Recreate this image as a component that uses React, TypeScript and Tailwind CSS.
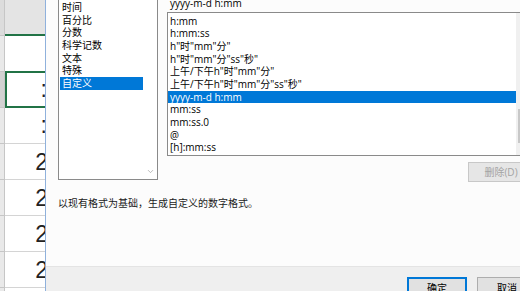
import { ChevronDown } from 'lucide-react';

const categories = ['日期', '时间', '百分比', '分数', '科学记数', '文本', '特殊', '自定义'];

const formats = [
  'h:mm',
  'h:mm:ss',
  'h"时"mm"分"',
  'h"时"mm"分"ss"秒"',
  '上午/下午h"时"mm"分"',
  '上午/下午h"时"mm"分"ss"秒"',
  'yyyy-m-d h:mm',
  'mm:ss',
  'mm:ss.0',
  '@',
  '[h]:mm:ss',
];

const rows = ['', ':', ':', '2', '2', '2', '2', ''];

function SheetStrip() {
  return (
    <div className="w-[45px] shrink-0 flex flex-col overflow-hidden bg-white">
      <div className="h-[36px] shrink-0 flex">
        <div className="w-[5px] bg-[#dcdcdc] border-r border-b border-[#c6c6c6]" />
        <div className="flex-1 bg-[#e4e4e4] border-b-2 border-[#217346]" />
      </div>
      {rows.map((r, i) => (
        <div key={i} className="h-[36px] shrink-0 flex">
          <div
            className={
              i === 1
                ? 'w-[5px] bg-[#d2d2d2] border-r border-b border-[#c6c6c6]'
                : 'w-[5px] bg-[#e9e9e9] border-r border-b border-[#c6c6c6]'
            }
          />
          <div
            className={
              i === 1
                ? 'flex-1 flex items-center justify-end border-2 border-r-0 border-[#217346] -mt-px overflow-hidden'
                : 'flex-1 flex items-center justify-end border-b border-[#d4d4d4] overflow-hidden'
            }
          >
            {r && (
              <span
                className={
                  r === ':'
                    ? "text-[23px] leading-none text-[#222] font-['Liberation_Sans',sans-serif] -mr-[2px]"
                    : "text-[23px] leading-none text-[#222] font-['Liberation_Sans',sans-serif] -mr-[3px] pt-[2px]"
                }
              >
                {r}
              </span>
            )}
          </div>
        </div>
      ))}
    </div>
  );
}

export default function App() {
  return (
    <div className="w-[520px] h-[291px] overflow-hidden flex bg-white font-['Open_Sans','Noto_Sans_CJK_SC',sans-serif] text-[10px] text-black">
      <SheetStrip />
      <div className="w-[500px] shrink-0 flex flex-col border-l border-[#8fb1dc] bg-[#fcfcfc]">
        <div className="h-[266px] shrink-0 flex flex-col pl-[12px] pr-[11px]">
          <div className="flex gap-[9px]">
            {/* category list */}
            <div className="w-[100px] h-[180px] shrink-0 flex border-x border-b border-[#8a8a8a] bg-white overflow-hidden">
              <div className="flex-1 pl-px -mt-[11.7px]">
                {categories.map((c) => (
                  <div
                    key={c}
                    className={
                      c === '自定义'
                        ? 'h-[12.7px] leading-[12.7px] pl-[2px] bg-[#0078d7] text-white'
                        : 'h-[12.7px] leading-[12.7px] pl-[2px]'
                    }
                  >
                    {c}
                  </div>
                ))}
              </div>
              <div className="w-[14px] flex flex-col justify-end items-center pb-[3px]">
                <ChevronDown className="w-[9px] h-[9px] text-[#a6a6a6]" strokeWidth={2} />
              </div>
            </div>

            {/* type + format list */}
            <div className="flex-1 flex flex-col">
              <div className="h-[12px] -mt-[3px] pl-[3px] leading-[12px] whitespace-nowrap">yyyy-m-d h:mm</div>
              <div className="h-[144px] mt-[3px] flex border border-[#8a8a8a] bg-white">
                <div className="flex-1 pt-[1.5px]">
                  {formats.map((f) => (
                    <div
                      key={f}
                      className={
                        f === 'yyyy-m-d h:mm'
                          ? 'h-[12.7px] leading-[12.7px] pl-[2px] whitespace-nowrap bg-[#0078d7] text-white'
                          : 'h-[12.7px] leading-[12.7px] pl-[2px] whitespace-nowrap'
                      }
                    >
                      {f}
                    </div>
                  ))}
                </div>
                <div className="w-[17px] bg-[#f0f0f0] pt-[96px]">
                  <div className="h-[34px] mx-[2px] bg-[#c8c8c8]" />
                </div>
              </div>
              <div className="self-end mt-[6px] w-[66px] h-[20px] flex items-center justify-center bg-[#e6e6e6] border border-[#c8c8c8] text-[#a3a3a3]">
                删除(D)
              </div>
            </div>
          </div>
          <div className="mt-[15px] leading-[12.7px] text-[#1a1a1a]">以现有格式为基础，生成自定义的数字格式。</div>
        </div>
        <div className="flex-1 flex justify-end gap-[10px] pr-[8px] pt-[10px] bg-[#efefef] border-t border-[#e4e4e4]">
          <div className="w-[60px] h-[22px] flex items-center justify-center bg-[#e1e1e1] border-2 border-[#0078d7]">
            确定
          </div>
          <div className="w-[60px] h-[22px] flex items-center justify-center bg-[#e1e1e1] border border-[#adadad]">
            取消
          </div>
        </div>
      </div>
    </div>
  );
}
